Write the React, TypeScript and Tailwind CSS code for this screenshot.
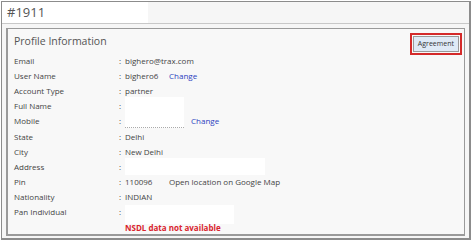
function Row({ label, children }: { label: string; children?: React.ReactNode }) {
  return (
    <div className="flex h-[15.2px] items-center">
      <span className="w-[105px] shrink-0">{label}</span>
      <span className="w-[6px] shrink-0">:</span>
      <div className="flex h-full items-center">{children}</div>
    </div>
  );
}

export default function App() {
  return (
    <div className="h-[243px] w-[474px] bg-white pl-[1px] pt-[1px] font-['Open_Sans',sans-serif]">
      <div className="h-[239px] w-[470px] border border-b-2 border-r-2 border-[#8c8c8c] bg-[#f6f6f6]">
        <div className="flex h-[22px] items-center border-b border-[#c8c8c8]">
          <div className="flex h-full w-[146px] items-center bg-white pl-[5px] text-[13px] text-[#555]">#1911</div>
        </div>
        <div className="mx-[4px] mt-[4px] h-[208px] border border-b-2 border-l-2 border-[#9a9a9a] bg-[#f8f8f8] pl-[6px] pr-[2px] text-[8px] text-[#444]">
          <div className="flex h-[24px] items-center justify-between pt-[2px]">
            <span className="text-[10.5px] text-[#555]">Profile Information</span>
            <div className="mt-[4px] border-2 border-[#d42a2a] p-[1px]">
              <button
                type="button"
                className="h-[16px] border border-[#999] bg-[#dfeaf6] px-[4px] text-[7px] text-[#333]"
              >
                Agreement
              </button>
            </div>
          </div>
          <Row label="Email">bighero@trax.com</Row>
          <Row label="User Name">
            <span className="w-[44px]">bighero6</span>
            <span className="text-[#2b3fbf]">Change</span>
          </Row>
          <Row label="Account Type">partner</Row>
          <Row label="Full Name">
            <span className="h-[17px] w-[59px] self-end bg-white" />
          </Row>
          <Row label="Mobile">
            <span className="h-[14px] w-[59px] self-start border-b border-dotted border-[#aaa] bg-white" />
            <span className="ml-[7px] text-[#2b3fbf]">Change</span>
          </Row>
          <Row label="State">Delhi</Row>
          <Row label="City">New Delhi</Row>
          <Row label="Address">
            <span className="h-[17px] w-[140px] bg-white" />
          </Row>
          <Row label="Pin">
            <span className="w-[44px]">110096</span>
            <span>Open location on Google Map</span>
          </Row>
          <Row label="Nationality">INDIAN</Row>
          <Row label="Pan Individual">
            <span className="h-[19px] w-[109px] self-start bg-white" />
          </Row>
          <div className="flex h-[15.2px] items-center pl-[111px] text-[8px] font-bold text-[#d9232d]">
            NSDL data not available
          </div>
        </div>
      </div>
    </div>
  );
}
